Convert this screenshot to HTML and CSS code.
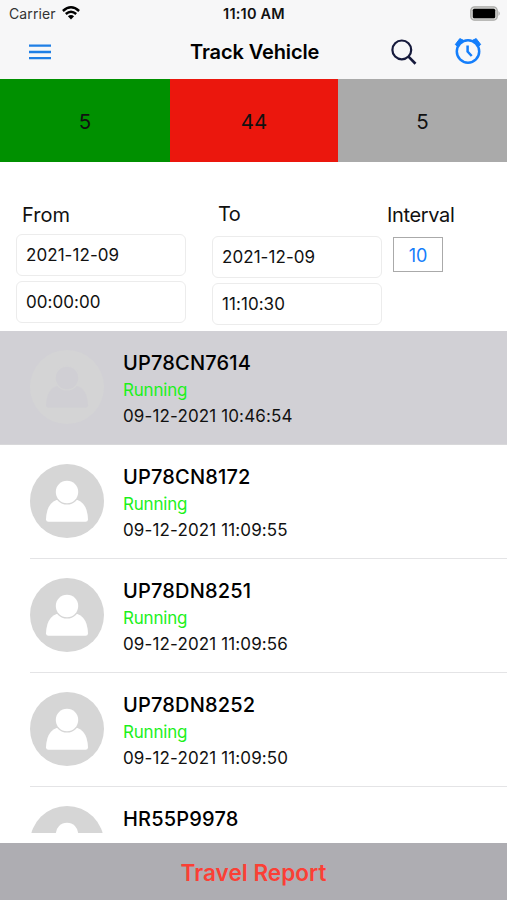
FILE: index.html
```html
<!DOCTYPE html>
<html lang="en">
<head>
<meta charset="utf-8">
<title>Track Vehicle</title>
<link rel="stylesheet" href="styles.css">
</head>
<body>

<svg width="0" height="0" class="defs">
  <symbol id="avatar" viewBox="0 0 74 74">
    <circle cx="37" cy="37" r="37" fill="currentColor"/>
    <path d="M26.500 36Q20 38.500 17.500 46Q16 51 16 55.500Q16 57.700 18.500 57.700H55.500Q58 57.700 58 55.500Q58 51 56.500 46Q54 38.500 47.500 36Z"/>
    <circle cx="37" cy="28" r="12.600" fill="currentColor"/>
    <circle cx="37" cy="28" r="11.200"/>
  </symbol>
</svg>

<header>
  <div class="status">
    <span class="carrier">Carrier
      <svg width="18" height="14" viewBox="0 0 18 14" fill="none" stroke="#000" stroke-width="2.4">
        <path d="M.9 5Q9-2.400 17.100 5M3.800 8Q9 3.300 14.200 8"/>
        <path d="M9 13.500L5.900 10.300Q9 7.700 12.100 10.300Z" fill="#000" stroke="none"/>
      </svg>
    </span>
    <span class="clock">11:10 AM</span>
    <svg class="battery" width="31" height="15" viewBox="0 0 31 15">
      <rect x=".8" y=".8" width="26.400" height="13.400" rx="3.800" fill="#d5d5d3" stroke="#a9a9a7" stroke-width="1.300"/>
      <rect x="2.800" y="2.800" width="22.400" height="9.400" rx="1.500"/>
      <path d="M28.500 5Q31 7.500 28.500 10Z" fill="#a9a9a7"/>
    </svg>
  </div>
  <div class="nav">
    <svg class="menu" width="22" height="16" viewBox="0 0 22 16" stroke="#1f7fe5" stroke-width="2.300">
      <path d="M0 1.600H22M0 8H22M0 14.200H22"/>
    </svg>
    <h1>Track Vehicle</h1>
    <svg class="search" width="26" height="26" viewBox="0 0 26 26" fill="none" stroke="#161a3c" stroke-width="2.200">
      <circle cx="10.800" cy="10.900" r="9.400"/>
      <path d="M17.500 17.600L24.500 24.700" stroke-width="2.700"/>
    </svg>
    <svg class="alarm" width="28" height="28" viewBox="0 0 28 28" fill="none" stroke="#147efb" stroke-width="2.500">
      <circle cx="14" cy="14.500" r="11.200"/>
      <path d="M13.600 8.500V14.600L17.700 19" stroke-width="2.500"/>
      <path d="M1.300 7.500L5.800 1.600L9.500 3.300L3.500 9.500ZM26.700 7.500L22.200 1.600L18.500 3.300L24.500 9.500Z" fill="#147efb" stroke="#147efb" stroke-width="1" stroke-linejoin="round"/>
    </svg>
  </div>
</header>

<div class="counts">
  <div class="green">5</div>
  <div class="red">44</div>
  <div class="gray">5</div>
</div>

<form class="filter">
  <div class="from">
    <label>From</label>
    <div class="field">2021-12-09</div>
    <div class="field">00:00:00</div>
  </div>
  <div class="to">
    <label>To</label>
    <div class="field">2021-12-09</div>
    <div class="field">11:10:30</div>
  </div>
  <div class="interval">
    <label>Interval</label>
    <div class="minutes">10</div>
  </div>
</form>

<ul class="vehicles">
  <li class="selected">
    <svg class="avatar"><use href="#avatar"/></svg>
    <div class="info">
      <h2>UP78CN7614</h2>
      <p class="state">Running</p>
      <p class="time">09-12-2021 10:46:54</p>
    </div>
  </li>
  <li>
    <svg class="avatar"><use href="#avatar"/></svg>
    <div class="info">
      <h2>UP78CN8172</h2>
      <p class="state">Running</p>
      <p class="time">09-12-2021 11:09:55</p>
    </div>
  </li>
  <li>
    <svg class="avatar"><use href="#avatar"/></svg>
    <div class="info">
      <h2>UP78DN8251</h2>
      <p class="state">Running</p>
      <p class="time">09-12-2021 11:09:56</p>
    </div>
  </li>
  <li>
    <svg class="avatar"><use href="#avatar"/></svg>
    <div class="info">
      <h2>UP78DN8252</h2>
      <p class="state">Running</p>
      <p class="time">09-12-2021 11:09:50</p>
    </div>
  </li>
  <li>
    <svg class="avatar"><use href="#avatar"/></svg>
    <div class="info">
      <h2>HR55P9978</h2>
    </div>
  </li>
</ul>

<footer>Travel Report</footer>

</body>
</html>
```

FILE: styles.css
```css
* {
  box-sizing: border-box;
  margin: 0;
  padding: 0;
}
body {
  width: 507px;
  height: 900px;
  overflow: hidden;
  display: flex;
  flex-direction: column;
  background: #fff;
  color: #111;
  font-family: Inter, "Liberation Sans", sans-serif;
  white-space: nowrap;
}
svg {
  display: block;
  flex: none;
}
.defs {
  position: absolute;
}

/* status bar and title */
header {
  height: 79px;
  flex: none;
  background: #f7f7f8;
}
.status {
  height: 28px;
  display: grid;
  grid-template-columns: 1fr auto 1fr;
  align-items: center;
  padding: 0 6px 0 9px;
  font-size: 14px;
  line-height: 28px;
}
.carrier {
  display: flex;
  align-items: center;
  gap: 6px;
  color: #333;
  letter-spacing: .1px;
}
.carrier svg {
  margin-top: -2px;
}
.clock {
  margin-left: -2px;
  font-weight: 600;
  font-size: 14.5px;
  letter-spacing: .2px;
}
.battery {
  justify-self: end;
  margin-top: -2px;
}
.nav {
  height: 48px;
  display: flex;
  align-items: center;
  padding: 0 25px 0 29px;
}
h1 {
  width: 130px;
  margin-left: 139px;
  color: #000;
  font-size: 20px;
  font-weight: 600;
  letter-spacing: -.12px;
}
.search {
  margin-left: 71px;
}
.alarm {
  margin-left: 37px;
  margin-top: -2px;
}

.counts {
  height: 83px;
  flex: none;
  display: grid;
  grid-template-columns: 170px 168px 169px;
  font-size: 20.5px;
  line-height: 81px;
  text-align: center;
}
.counts div {
  padding-top: 2px;
}
.green {
  background: #009000;
}
.red {
  background: #eb170d;
}
.gray {
  background: #aaa;
}

/* date range */
.filter {
  height: 169px;
  flex: none;
  display: flex;
  padding-left: 16px;
}
.from,
.to {
  width: 170px;
}
.from {
  padding-top: 40px;
}
.to {
  margin-left: 26px;
  padding-top: 39px;
}
.interval {
  margin-left: 5px;
  padding-top: 40px;
}
label {
  display: block;
  height: 32px;
  padding-left: 6px;
  font-size: 20px;
  line-height: 26px;
}
.to label {
  height: 35px;
  letter-spacing: -.5px;
}
.interval label {
  height: 35px;
  padding-left: 0;
  letter-spacing: -.35px;
}
.field {
  height: 42px;
  margin-bottom: 5px;
  padding-left: 9px;
  border: 1px solid #ececec;
  border-radius: 6px;
  font-size: 17px;
  letter-spacing: .06px;
  line-height: 41px;
}
.minutes {
  width: 50px;
  height: 35px;
  margin-left: 6px;
  border: 1px solid #aaa;
  color: #147efb;
  font-size: 18px;
  line-height: 35px;
  text-align: center;
}

/* vehicle list */
.vehicles {
  height: 502px;
  margin-bottom: 10px;
  flex: none;
  overflow: hidden;
  list-style: none;
}
.vehicles li {
  height: 114px;
  display: flex;
  margin-left: 30px;
  padding-top: 19px;
  border-bottom: 1px solid #e4e4e6;
}
.vehicles .selected {
  margin-left: 0;
  padding-left: 30px;
  background: #d1d0d5;
  border-color: #d8d8da;
}
.avatar {
  width: 74px;
  height: 74px;
  margin-right: 19px;
  color: #d6d6d6;
  fill: #fff;
}
.selected .avatar {
  color: #d4d4d5;
  fill: #d0cfd4;
}
h2 {
  color: #000;
  font-size: 20px;
  font-weight: 500;
  letter-spacing: .18px;
  line-height: 26px;
}
.state {
  color: #1cf01c;
  font-size: 17px;
  letter-spacing: -.2px;
  line-height: 28px;
}
.time {
  font-size: 17px;
  letter-spacing: .13px;
  line-height: 25px;
}

footer {
  height: 57px;
  flex: none;
  background: #aeadb2;
  color: #fb3f35;
  font-size: 22.5px;
  font-weight: 600;
  letter-spacing: .05px;
  line-height: 59px;
  text-align: center;
}
```
